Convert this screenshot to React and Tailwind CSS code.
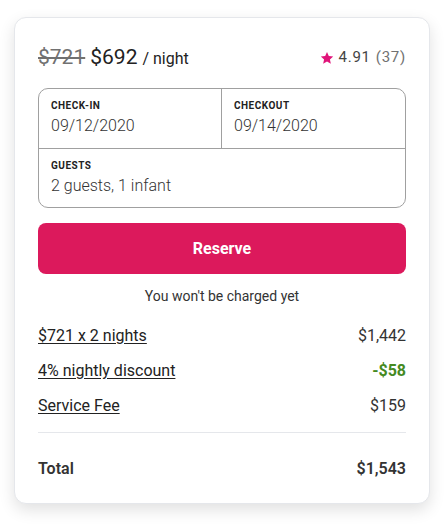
import { useState } from 'react';

function Star() {
  return (
    <svg viewBox="0 0 24 24" className="w-[14px] h-[14px] fill-[#e0147a] mr-[5px] translate-y-[1px]">
      <path d="M12 1.8l3.1 6.9 7.5.8-5.6 5.1 1.6 7.4L12 18.2l-6.6 3.8 1.6-7.4-5.6-5.1 7.5-.8z" />
    </svg>
  );
}

function LineItem({ label, value, valueClass = 'text-[#333]' }) {
  return (
    <div className="flex items-center justify-between h-6 text-base">
      <span className="underline underline-offset-2 text-[#222]">{label}</span>
      <span className={valueClass}>{value}</span>
    </div>
  );
}

function Field({ label, value, className = 'pb-3' }) {
  return (
    <div className={`px-3 pt-[10px] ${className}`}>
      <div className="text-[10px] leading-[14px] font-bold tracking-wider uppercase text-[#222]">{label}</div>
      <div className="mt-[3px] text-base leading-5 font-light text-[#333]">{value}</div>
    </div>
  );
}

export default function App() {
  const [guests] = useState('2 guests, 1 infant');

  return (
    <div className="min-h-screen bg-white pt-[17px] pl-[14px] font-['Roboto',sans-serif]">
      <div className="w-[416px] rounded-xl border border-gray-200 bg-white px-[23px] pt-6 pb-[22px] shadow-[0_6px_16px_rgba(0,0,0,0.12)]">
        <div className="flex items-baseline justify-between h-7">
          <div className="flex items-baseline">
            <span className="text-[21px] text-[#717171] line-through decoration-[1.5px]">$721</span>
            <span className="text-[21px] text-[#222] ml-[5px]">$692</span>
            <span className="text-base text-[#222] ml-[5px]">/ night</span>
          </div>
          <div className="flex items-center text-[15px] tracking-wider">
            <Star />
            <span className="text-[#444]">4.91</span>
            <span className="text-[#717171] ml-[5px]">(37)</span>
          </div>
        </div>

        <div className="mt-[18px] rounded-[10px] border border-[#a0a0a0]">
          <div className="grid grid-cols-2 border-b border-[#a0a0a0]">
            <Field label="Check-in" value="09/12/2020" className="pb-3 border-r border-[#a0a0a0]" />
            <Field label="Checkout" value="09/14/2020" />
          </div>
          <Field label="Guests" value={guests} className="pb-[11px]" />
        </div>

        <button className="mt-[15px] w-full h-[51px] rounded-lg bg-[#dc195c] text-white text-base font-bold">
          Reserve
        </button>

        <p className="mt-3 text-center text-sm leading-5 text-[#333]">You won't be charged yet</p>

        <div className="mt-[18px] flex flex-col gap-[11px]">
          <LineItem label="$721 x 2 nights" value="$1,442" />
          <LineItem label="4% nightly discount" value="-$58" valueClass="text-[#458a1f] font-bold" />
          <LineItem label="Service Fee" value="$159" />
        </div>

        <div className="mt-[14px] border-t border-gray-200" />

        <div className="mt-6 flex items-center justify-between h-6 text-base font-semibold text-[#333]">
          <span>Total</span>
          <span>$1,543</span>
        </div>
      </div>
    </div>
  );
}
